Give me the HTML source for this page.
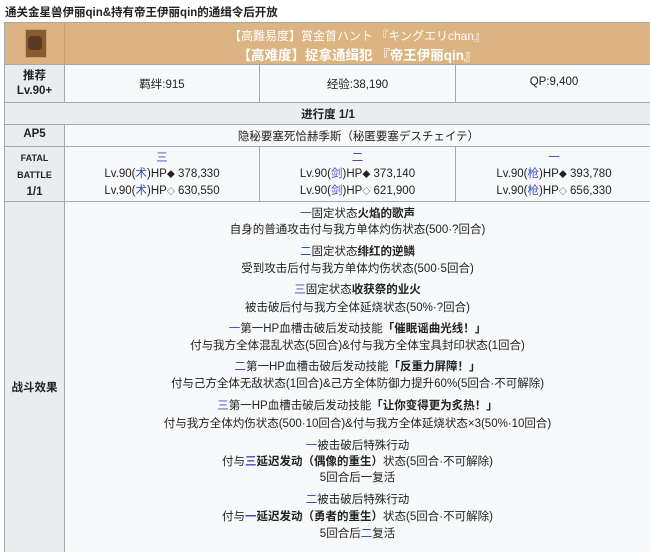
<!DOCTYPE html>
<html><head><meta charset="utf-8"><style>
body{margin:0;width:650px;height:540px;overflow:hidden;background:#fff;font-family:"Liberation Sans","Noto Sans CJK SC",sans-serif;color:#222;position:relative}
.a{position:absolute}
.c{position:absolute;text-align:center;box-sizing:border-box}
.l{position:absolute;left:65px;width:585px;text-align:center;font-size:11.5px;line-height:14px;white-space:nowrap}
.b{color:#3a50c0}
.d{font-size:8px}
b{font-weight:bold}
</style></head><body>
<div class="a" style="left:5px;top:4px;font-size:11.5px;font-weight:bold">通关金星兽伊丽qin&amp;持有帝王伊丽qin的通缉令后开放</div>
<div class="a" style="left:4px;top:22px;width:650px;height:530px;background:#a2a9b1"></div>
<!-- header -->
<div class="a" style="left:5px;top:23px;width:646px;height:41px;background:#dcb482"></div>
<div class="a" style="left:64px;top:23px;width:1px;height:41px;background:#c9a070"></div>
<div class="a" style="left:25px;top:29px;width:20px;height:27px;background:#8a5a30;border:1px solid #c8a070"></div>
<div class="a" style="left:28px;top:36px;width:14px;height:14px;background:#5a3a20;border-radius:4px"></div>
<div class="c" style="left:65px;width:585px;top:27px;font-size:12px;color:#fff">【高難易度】賞金首ハント 『キングエリchan』</div>
<div class="c" style="left:65px;width:585px;top:44px;font-size:13.5px;color:#fff;font-weight:bold">【高难度】捉拿通缉犯 『帝王伊丽qin』</div>
<!-- row 2 -->
<div class="c" style="left:5px;top:65px;width:59px;height:37px;background:#eaecf0;font-size:11.5px;font-weight:bold;padding-top:4px;line-height:15px">推荐<br>Lv.90+</div>
<div class="c" style="left:65px;top:65px;width:194px;height:37px;background:#f8f9fa;font-size:11.5px;padding-top:11px">羁绊:915</div>
<div class="c" style="left:260px;top:65px;width:195px;height:37px;background:#f8f9fa;font-size:11.5px;padding-top:11px">经验:38,190</div>
<div class="c" style="left:456px;top:65px;width:196px;height:37px;background:#f8f9fa;font-size:11.5px;padding-top:11px">QP:9,400</div>
<!-- progress -->
<div class="c" style="left:5px;top:103px;width:646px;height:21px;background:#eaecf0;font-size:11.5px;font-weight:bold;padding-top:3px">进行度 1/1</div>
<!-- AP -->
<div class="c" style="left:5px;top:125px;width:59px;height:21px;background:#eaecf0;font-size:11.5px;font-weight:bold;padding-top:3px">AP5</div>
<div class="c" style="left:65px;top:125px;width:587px;height:21px;background:#f8f9fa;font-size:11.5px;padding-top:3px">隐秘要塞死恰赫季斯（秘匿要塞デスチェイテ）</div>
<!-- fatal -->
<div class="c" style="left:5px;top:147px;width:59px;height:54px;background:#eaecf0;font-size:9px;font-weight:bold;padding-top:3px;line-height:17px">FATAL<br>BATTLE<br><span style="font-size:11.5px">1/1</span></div>
<div class="c" style="left:65px;top:147px;width:194px;height:54px;background:#f8f9fa;font-size:11.5px;line-height:16px;padding-top:3px"><span class="b">三</span><br>Lv.90(<span class="b">术</span>)HP<span class="d">◆</span> 378,330<br>Lv.90(<span class="b">术</span>)HP<span class="d">◇</span> 630,550</div>
<div class="c" style="left:260px;top:147px;width:195px;height:54px;background:#f8f9fa;font-size:11.5px;line-height:16px;padding-top:3px"><span class="b">二</span><br>Lv.90(<span class="b">剑</span>)HP<span class="d">◆</span> 373,140<br>Lv.90(<span class="b">剑</span>)HP<span class="d">◇</span> 621,900</div>
<div class="c" style="left:456px;top:147px;width:196px;height:54px;background:#f8f9fa;font-size:11.5px;line-height:16px;padding-top:3px"><span class="b">一</span><br>Lv.90(<span class="b">枪</span>)HP<span class="d">◆</span> 393,780<br>Lv.90(<span class="b">枪</span>)HP<span class="d">◇</span> 656,330</div>
<!-- effects -->
<div class="c" style="left:5px;top:202px;width:59px;height:350px;background:#eaecf0;font-size:11.5px;font-weight:bold;padding-top:177px">战斗效果</div>
<div class="a" style="left:65px;top:202px;width:590px;height:350px;background:#f8f9fa"></div>
<div class="l" style="top:207px"><span class="b">一</span>固定状态<b>火焰的歌声</b></div>
<div class="l" style="top:223px">自身的普通攻击付与我方单体灼伤状态(500·?回合)</div>
<div class="l" style="top:245px"><span class="b">二</span>固定状态<b>绯红的逆鳞</b></div>
<div class="l" style="top:262px">受到攻击后付与我方单体灼伤状态(500·5回合)</div>
<div class="l" style="top:283px"><span class="b">三</span>固定状态<b>收获祭的业火</b></div>
<div class="l" style="top:301px">被击破后付与我方全体延烧状态(50%·?回合)</div>
<div class="l" style="top:322px"><span class="b">一</span>第一HP血槽击破后发动技能<b>「催眠谣曲光线！」</b></div>
<div class="l" style="top:339px">付与我方全体混乱状态(5回合)&amp;付与我方全体宝具封印状态(1回合)</div>
<div class="l" style="top:360px"><span class="b">二</span>第一HP血槽击破后发动技能<b>「反重力屏障！」</b></div>
<div class="l" style="top:377px">付与己方全体无敌状态(1回合)&amp;己方全体防御力提升60%(5回合·不可解除)</div>
<div class="l" style="top:399px"><span class="b">三</span>第一HP血槽击破后发动技能<b>「让你变得更为炙热！」</b></div>
<div class="l" style="top:417px">付与我方全体灼伤状态(500·10回合)&amp;付与我方全体延烧状态×3(50%·10回合)</div>
<div class="l" style="top:439px"><span class="b">一</span>被击破后特殊行动</div>
<div class="l" style="top:455px">付与<span class="b"><b>三</b></span><b>延迟发动（偶像的重生）</b>状态(5回合·不可解除)</div>
<div class="l" style="top:471px">5回合后一复活</div>
<div class="l" style="top:493px"><span class="b">二</span>被击破后特殊行动</div>
<div class="l" style="top:510px">付与<span class="b"><b>一</b></span><b>延迟发动（勇者的重生）</b>状态(5回合·不可解除)</div>
<div class="l" style="top:527px">5回合后<span class="b">二</span>复活</div>
</body></html>
